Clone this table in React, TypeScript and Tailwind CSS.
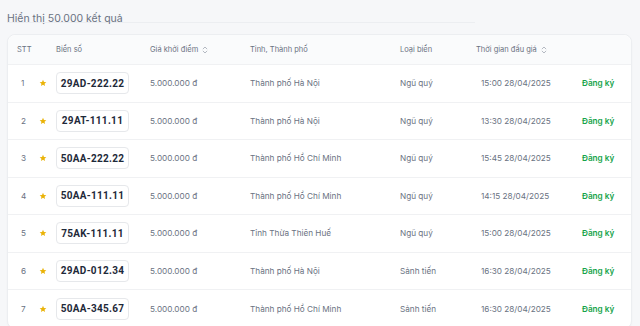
type Row = {
  stt: number;
  plate: string;
  price: string;
  province: string;
  kind: string;
  time: string;
};

const rows: Row[] = [
  { stt: 1, plate: "29AD-222.22", price: "5.000.000 đ", province: "Thành phố Hà Nội", kind: "Ngũ quý", time: "15:00 28/04/2025" },
  { stt: 2, plate: "29AT-111.11", price: "5.000.000 đ", province: "Thành phố Hà Nội", kind: "Ngũ quý", time: "13:30 28/04/2025" },
  { stt: 3, plate: "50AA-222.22", price: "5.000.000 đ", province: "Thành phố Hồ Chí Minh", kind: "Ngũ quý", time: "15:45 28/04/2025" },
  { stt: 4, plate: "50AA-111.11", price: "5.000.000 đ", province: "Thành phố Hồ Chí Minh", kind: "Ngũ quý", time: "14:15 28/04/2025" },
  { stt: 5, plate: "75AK-111.11", price: "5.000.000 đ", province: "Tỉnh Thừa Thiên Huế", kind: "Ngũ quý", time: "15:00 28/04/2025" },
  { stt: 6, plate: "29AD-012.34", price: "5.000.000 đ", province: "Thành phố Hà Nội", kind: "Sảnh tiến", time: "16:30 28/04/2025" },
  { stt: 7, plate: "50AA-345.67", price: "5.000.000 đ", province: "Thành phố Hồ Chí Minh", kind: "Sảnh tiến", time: "16:30 28/04/2025" },
];

const cols = "grid grid-cols-[31px_14px_88px_100px_150px_76px_105px_1fr]";

function Star() {
  return (
    <svg viewBox="0 0 24 24" className="w-[8px] h-[8px]" fill="#eab308">
      <path d="M12 2l2.9 6.9 7.1.6-5.4 4.7 1.6 7L12 17.5 5.8 21.2l1.6-7L2 9.5l7.1-.6z" />
    </svg>
  );
}

function SortIcon() {
  return (
    <svg viewBox="0 0 8 10" className="w-[6px] h-[8px] ml-[4px]" fill="none" stroke="#9ca3af" strokeWidth={1} strokeLinecap="round" strokeLinejoin="round">
      <path d="M1.5 3.5L4 1l2.5 2.5" />
      <path d="M1.5 6.5L4 9l2.5-2.5" />
    </svg>
  );
}

export default function App() {
  return (
    <div
      className="w-[640px] h-[326px] overflow-hidden bg-[#f6f7f9] pl-[7px] pr-[8px]"
      style={{ fontFamily: "Inter, 'Noto Sans', sans-serif" }}
    >
      <div className="w-[468px] h-[23px] border-b border-[#eceef1] pt-[4px]">
        <span className="text-[10.5px] text-gray-500">Hiển thị 50.000 kết quả</span>
      </div>

      <div className="mt-[11px] bg-white rounded-lg border border-[#eceef1] shadow-[0_1px_2px_rgba(0,0,0,0.03)]">
        <div className={`${cols} h-[30px] items-center text-[7.5px] text-gray-500 bg-[#fafbfc] rounded-t-lg border-b border-[#f0f1f3]`}>
          <div className="pl-[9px]">STT</div>
          <div />
          <div className="pl-[3px]">Biển số</div>
          <div className="pl-[9px] flex items-center">
            Giá khởi điểm <SortIcon />
          </div>
          <div className="pl-[9px]">Tỉnh, Thành phố</div>
          <div className="pl-[9px]">Loại biển</div>
          <div className="pl-[9px] flex items-center">
            Thời gian đấu giá <SortIcon />
          </div>
          <div />
        </div>

        {rows.map((r) => (
          <div
            key={r.stt}
            className={`${cols} h-[37.5px] items-center text-[8.2px] text-gray-500 border-b border-[#f0f1f3] last:border-b-0`}
          >
            <div className="pl-[13px]">{r.stt}</div>
            <div className="flex items-center">
              <Star />
            </div>
            <div className="pl-[3px] flex">
              <span className="font-['Roboto'] whitespace-nowrap inline-flex items-center justify-center w-[73px] h-[22px] rounded-[4px] border border-[#e6e8eb] text-[10px] font-bold text-gray-800 tracking-[0.3px]">
                {r.plate}
              </span>
            </div>
            <div className="pl-[9px] whitespace-nowrap">{r.price}</div>
            <div className="pl-[9px] whitespace-nowrap">{r.province}</div>
            <div className="pl-[9px] whitespace-nowrap">{r.kind}</div>
            <div className="pl-[14px] whitespace-nowrap">{r.time}</div>
            <div className="pl-[10px] whitespace-nowrap font-semibold text-[#16a34a]">Đăng ký</div>
          </div>
        ))}
      </div>
    </div>
  );
}
